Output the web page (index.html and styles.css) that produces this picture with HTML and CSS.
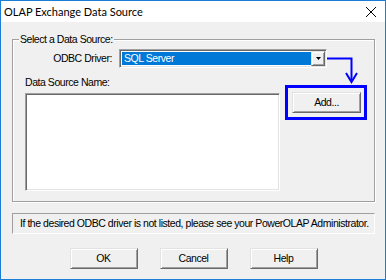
FILE: index.html
```html
<!DOCTYPE html>
<html lang="en">
<head>
    <meta charset="UTF-8">
    <title>OLAP Exchange Data Source</title>
    <link rel="stylesheet" href="styles.css">
</head>
<body>
    <div class="window">
        <div class="titlebar">
            <span class="title">OLAP Exchange Data Source</span>
            <svg class="close" width="12" height="12" viewBox="0 0 12 12">
                <path d="M1 1 L11 11 M11 1 L1 11" stroke="#000" stroke-width="1" fill="none"/>
            </svg>
        </div>
        <div class="client">
            <fieldset class="group">
                <legend>Select a Data Source:</legend>
                <div class="driver-row">
                    <label class="driver-label">ODBC Driver:</label>
                    <div class="combo">
                        <span class="combo-value">SQL Server</span>
                        <span class="combo-btn">
                            <svg width="5" height="3" viewBox="0 0 5 3"><path d="M0 0 H5 L2.5 3 Z" fill="#000"/></svg>
                        </span>
                    </div>
                </div>
                <div class="source-row">
                    <div class="source-col">
                        <div class="caption">Data Source Name:</div>
                        <div class="listbox"></div>
                    </div>
                    <div class="add-mark">
                        <button class="btn">Add...</button>
                    </div>
                </div>
            </fieldset>
            <div class="note">If the desired ODBC driver is not listed, please see your PowerOLAP Administrator.</div>
            <div class="actions">
                <button class="btn">OK</button>
                <button class="btn">Cancel</button>
                <button class="btn">Help</button>
            </div>
        </div>
        <!-- annotation arrow from the driver box down to the Add button -->
        <svg class="pointer" width="386" height="280" viewBox="0 0 386 280">
            <path d="M327 58.5 H351.5 V81" stroke="#0000ff" stroke-width="2" fill="none"/>
            <path d="M346 73 L351.5 82 L357 73" stroke="#0000ff" stroke-width="2" fill="none"/>
        </svg>
    </div>
</body>
</html>
```

FILE: styles.css
```css
body {
    margin: 0;
    font-family: "Liberation Sans", Arial, sans-serif;
    font-size: 10.5px;
    letter-spacing: -0.45px;
    line-height: 13px;
    color: #000;
    background: #fff;
}
.window {
    position: relative;
    width: 386px;
    height: 280px;
    box-sizing: border-box;
    border: 1px solid #1a7fd4;
    display: flex;
    flex-direction: column;
    background: #f0f0f0;
}
.titlebar {
    height: 21px;
    background: #fff;
    display: flex;
    align-items: center;
    justify-content: space-between;
    padding: 0 8px 0 3px;
}
.title {
    font-family: Lato, sans-serif;
    font-size: 11px;
    letter-spacing: 0;
}
.client {
    flex: 1;
    background: #f0f0f0;
}
.group {
    box-sizing: border-box;
    width: 363px;
    height: 169px;
    margin: 11px 0 0 11px;
    padding: 0;
    min-width: 0;
    border: 1px solid #a0a0a0;
    box-shadow: 1px 1px 0 #fff, inset 1px 1px 0 #fff;
}
.group legend {
    margin-left: 6px;
    padding: 0 1px;
    background: #f0f0f0;
}
.driver-row {
    display: flex;
    align-items: center;
    margin-top: 3px;
}
.driver-label {
    width: 99px;
    margin-right: 7px;
    text-align: right;
}
.combo {
    box-sizing: border-box;
    width: 208px;
    height: 19px;
    display: flex;
    border: 1px solid;
    border-color: #a0a0a0 #fff #fff #a0a0a0;
    box-shadow: inset 1px 1px 0 #696969, inset -1px -1px 0 #e3e3e3;
    padding: 2px;
    background: #fff;
}
.combo-value {
    flex: 1;
    background: #0078d7;
    color: #fff;
    padding-left: 2px;
    line-height: 13px;
}
.combo-btn {
    box-sizing: border-box;
    width: 14px;
    margin: -1px -1px -1px 0;
    display: flex;
    align-items: center;
    justify-content: center;
    background: #f0f0f0;
    border: 1px solid;
    border-color: #e3e3e3 #696969 #696969 #e3e3e3;
    box-shadow: inset 1px 1px 0 #fff, inset -1px -1px 0 #a0a0a0;
}
.source-row {
    display: flex;
    margin-top: 8px;
    padding-left: 12px;
}
.caption {
    margin-bottom: 4px;
}
.listbox {
    box-sizing: border-box;
    width: 255px;
    height: 98px;
    background: #fff;
    border: 1px solid;
    border-color: #a0a0a0 #fff #fff #a0a0a0;
    box-shadow: inset 1px 1px 0 #696969, inset -1px -1px 0 #e3e3e3;
}
.add-mark {
    box-sizing: border-box;
    width: 82px;
    height: 35px;
    margin: 9px 0 0 5px;
    border: 3px solid #0000ff;
    padding: 4px 3px 0 4px;
}
.btn {
    box-sizing: border-box;
    width: 68px;
    height: 21px;
    padding: 0;
    font: inherit;
    letter-spacing: inherit;
    color: #000;
    background: #f0f0f0;
    border: 1px solid;
    border-color: #e3e3e3 #696969 #696969 #e3e3e3;
    box-shadow: inset 1px 1px 0 #fff, inset -1px -1px 0 #a0a0a0;
}
.add-mark .btn {
    width: 69px;
}
.note {
    box-sizing: border-box;
    width: 363px;
    height: 21px;
    margin: 11px 0 0 11px;
    padding: 3px 0 0 7px;
    border: 1px solid;
    border-color: #a0a0a0 #fff #fff #a0a0a0;
    white-space: nowrap;
    overflow: hidden;
}
.actions {
    display: flex;
    justify-content: center;
    gap: 22px;
    margin-top: 14px;
    padding-left: 1px;
}
.pointer {
    position: absolute;
    left: -1px;
    top: -1px;
    pointer-events: none;
}
```
